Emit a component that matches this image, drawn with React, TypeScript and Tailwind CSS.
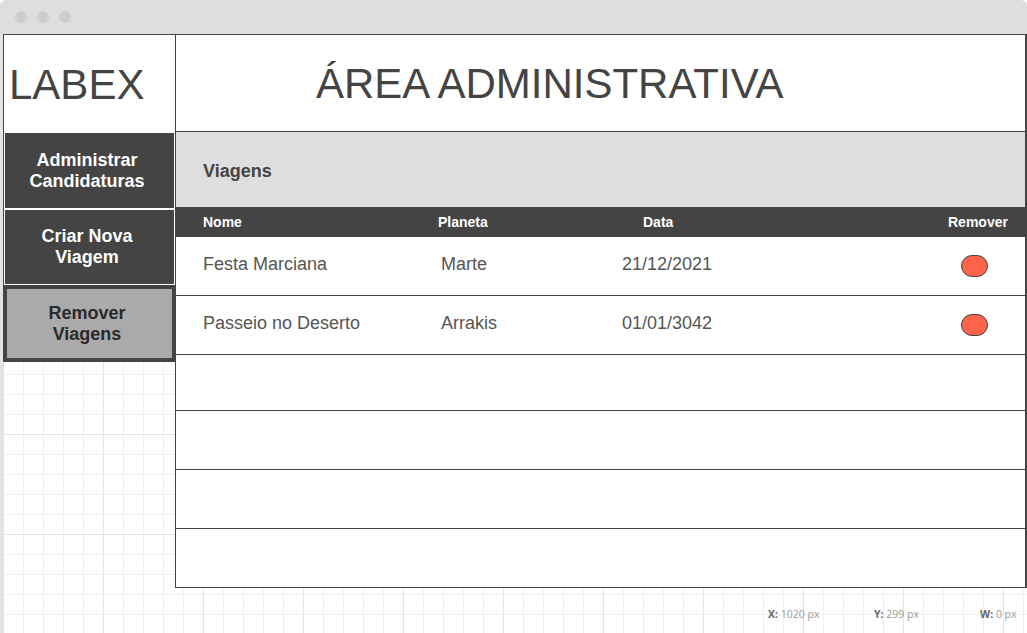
import React from "react";

type Trip = {
  name: string;
  planet: string;
  date: string;
};

const trips: Trip[] = [
  { name: "Festa Marciana", planet: "Marte", date: "21/12/2021" },
  { name: "Passeio no Deserto", planet: "Arrakis", date: "01/01/3042" },
];

const emptyRows = ["h-[56px] border-b", "h-[59px] border-b", "h-[59px] border-b", "h-[58px]"];

const stats = [
  { label: "X:", value: "1020 px" },
  { label: "Y:", value: "299 px" },
  { label: "W:", value: "0 px" },
];

const NavButton = ({ label, className }: { label: string; className: string }) => (
  <div
    className={`flex items-center justify-center pl-[21px] pr-[26px] text-center text-[18px] leading-[21px] font-bold ${className}`}
  >
    {label}
  </div>
);

const TripRow = ({ trip }: { trip: Trip }) => (
  <div className="flex h-[59px] items-center border-b border-[#444] pl-[27px] text-[18px] text-[#555]">
    <span className="mb-[4px] w-[238px]">{trip.name}</span>
    <span className="mb-[4px] w-[181px]">{trip.planet}</span>
    <span className="mb-[4px] w-[339px]">{trip.date}</span>
    <button className="h-[22px] w-[27px] rounded-full border border-[#444] bg-[#fe6449]" />
  </div>
);

const App = () => {
  return (
    <div className="flex h-[633px] w-[1027px] flex-col overflow-hidden bg-white font-['Liberation_Sans',Arial,sans-serif]">
      {/* window chrome */}
      <div className="flex h-[34px] shrink-0 items-center gap-[10px] rounded-t-[6px] bg-[#dedede] pl-[15px]">
        <span className="h-[12px] w-[12px] rounded-full bg-[#cdcdcd]" />
        <span className="h-[12px] w-[12px] rounded-full bg-[#cdcdcd]" />
        <span className="h-[12px] w-[12px] rounded-full bg-[#cdcdcd]" />
      </div>

      <div className="flex flex-1">
        <div className="w-[3px] shrink-0 bg-[#e4e4e4]" />

        {/* canvas */}
        <div className="flex w-[1024px] shrink-0 flex-col bg-white bg-[image:linear-gradient(to_right,#e4e4e4_1px,transparent_1px),linear-gradient(to_bottom,#e4e4e4_1px,transparent_1px),linear-gradient(to_right,#f0f0f0_1px,transparent_1px),linear-gradient(to_bottom,#f0f0f0_1px,transparent_1px)] bg-[size:100px_100px,100px_100px,20px_20px,20px_20px] bg-[position:0px_0px]">
          <div className="flex items-start">
            {/* left column */}
            <div className="flex w-[172px] shrink-0 flex-col">
              <div className="flex h-[99px] items-center border-l border-t border-[#444] bg-white pl-[5px] text-[42px] text-[#444]">
                LABEX
              </div>
              <div className="flex flex-col border-l border-[#444] bg-white px-[1px] text-white">
                <NavButton label="Administrar Candidaturas" className="h-[75px] bg-[#444]" />
                <NavButton label="Criar Nova Viagem" className="mt-[2px] h-[74px] bg-[#444]" />
                <div className="h-[1px]" />
              </div>
              <NavButton
                label="Remover Viagens"
                className="h-[77px] border-[4px] border-r-[3px] border-[#444] bg-[#aaa] text-[#2a2a2a]"
              />
            </div>

            {/* main panel */}
            <div className="flex flex-1 flex-col border-b border-l border-r-2 border-t border-[#444] bg-white">
              <div className="flex h-[97px] items-center border-b border-[#444] pl-[140px] text-[42px] text-[#444]">
                ÁREA ADMINISTRATIVA
              </div>
              <div className="flex h-[75px] items-center bg-[#dedede] pl-[27px] pt-[3px] text-[18px] font-bold text-[#444]">
                Viagens
              </div>
              <div className="flex h-[30px] items-center bg-[#444] pl-[27px] text-[14px] font-bold text-white">
                <span className="w-[235px]">Nome</span>
                <span className="w-[205px]">Planeta</span>
                <span className="w-[305px]">Data</span>
                <span>Remover</span>
              </div>
              {trips.map((trip) => (
                <TripRow key={trip.name} trip={trip} />
              ))}
              {emptyRows.map((cls, i) => (
                <div key={i} className={`${cls} border-[#444]`} />
              ))}
            </div>
          </div>

          {/* status */}
          <div className="ml-[765px] mt-[20px] flex font-['Open_Sans',Arial,sans-serif] text-[10.5px] leading-[12px]">
            {stats.map((s) => (
              <span key={s.label} className="w-[106px] shrink-0 text-[#999] last:w-auto">
                <b className="text-[#666]">{s.label}</b> {s.value}
              </span>
            ))}
          </div>
        </div>
      </div>
    </div>
  );
};

export default App;
